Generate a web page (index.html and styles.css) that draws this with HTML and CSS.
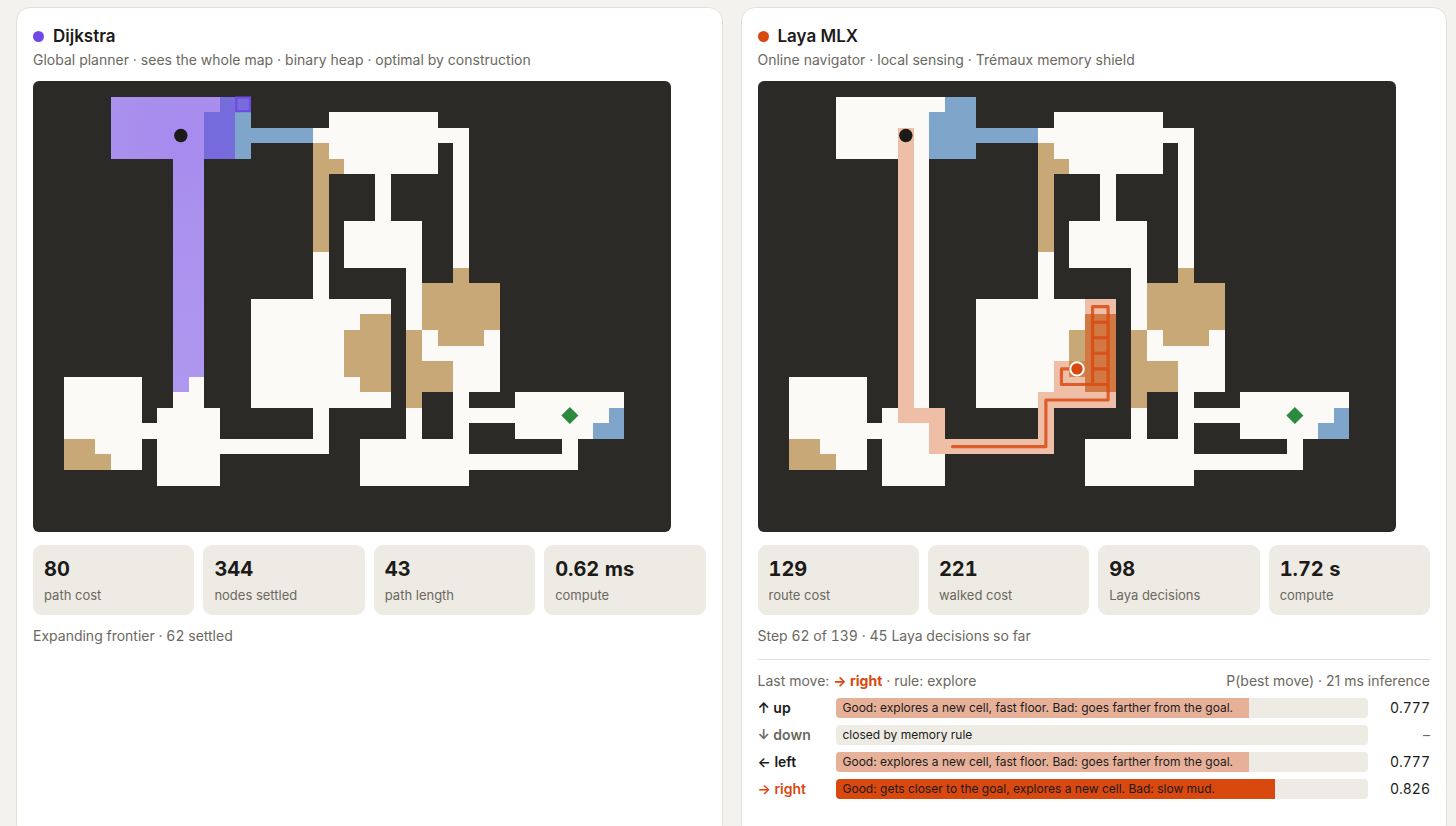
FILE: index.html
```html
<!DOCTYPE html>
<html lang="en">
<head>
  <meta charset="UTF-8" />
  <meta name="viewport" content="width=device-width, initial-scale=1.0"/>
  <title>Dijkstra vs Laya MLX</title>
  <link rel="stylesheet" href="styles.css">
</head>
<body>
  <!-- shared map, one unit per cell, 41 x 29 -->
  <svg class="defs" width="0" height="0" aria-hidden="true">
    <defs>
      <g id="terrain">
        <rect class="wall" width="41" height="29"/>
        <path class="floor" d="M5 1h9v4h-9z M18 3h1v11h-1z M19 2h7v4h-7z M26 3h2v1h-2z M27 3h1v9h-1z M22 6h1v3h-1z M20 9h5v3h-5z M24 12h1v11h-1z M25 13h5v7h-5z M14 14h9v7h-9z M18 21h1v3h-1z M12 23h7v1h-7z M2 19h5v6h-5z M7 22h1v1h-1z M8 21h4v5h-4z M9 5h2v16h-2z M27 20h1v3h-1z M28 21h3v1h-3z M31 20h7v3h-7z M34 23h1v1h-1z M28 24h7v1h-7z M21 23h7v3h-7z"/>
        <path class="water" d="M12 1h2v1h-2z M11 2h3v3h-3z M14 3h4v1h-4z M37 21h1v1h-1z M36 22h2v1h-2z"/>
        <path class="mud" d="M18 4h1v7h-1z M19 5h1v1h-1z M27 12h1v1h-1z M25 13h5v3h-5z M26 16h3v1h-3z M24 16h1v5h-1z M25 18h2v2h-2z M21 15h2v5h-2z M20 16h1v3h-1z M2 23h2v1h-2z M2 24h3v1h-3z"/>
      </g>
      <g id="markers">
        <circle class="start" cx="9.5" cy="3.5" r="0.43"/>
        <path class="goal" d="M34.5 20.95l.55 .55l-.55 .55l-.55 -.55z"/>
      </g>
      <radialGradient id="wave" gradientUnits="userSpaceOnUse" cx="9.5" cy="3.5" r="17">
        <stop offset="0" stop-color="#6f42e8" stop-opacity="0.61"/>
        <stop offset="0.3" stop-color="#6f42e8" stop-opacity="0.57"/>
        <stop offset="1" stop-color="#6f42e8" stop-opacity="0.54"/>
      </radialGradient>
    </defs>
  </svg>

  <main class="panels">
    <section class="card">
      <h2><span class="dot dijkstra"></span>Dijkstra</h2>
      <p class="sub">Global planner · sees the whole map · binary heap · optimal by construction</p>
      <svg class="map" viewBox="0 0 41 29" role="img" aria-label="Dijkstra map">
        <use href="#terrain"/>
        <path class="settled" d="M5 1h9v1h-1v3h-2v14h-1v1h-1v-15h-4z"/>
        <rect class="current" x="13.06" y="1.06" width="0.88" height="0.88"/>
        <use href="#markers"/>
      </svg>
      <div class="stats">
        <div class="stat"><b>80</b><span>path cost</span></div>
        <div class="stat"><b>344</b><span>nodes settled</span></div>
        <div class="stat"><b>43</b><span>path length</span></div>
        <div class="stat"><b>0.62 ms</b><span>compute</span></div>
      </div>
      <p class="status">Expanding frontier · 62 settled</p>
    </section>

    <section class="card">
      <h2><span class="dot laya"></span>Laya MLX</h2>
      <p class="sub">Online navigator · local sensing · Trémaux memory shield</p>
      <svg class="map" viewBox="0 0 41 29" role="img" aria-label="Laya MLX map">
        <use href="#terrain"/>
        <path class="visited" d="M9 3h1v18h2v2h6v-3h1v-2h2v2h2v1h-4v3h-8v-2h-2z M21 14h2v1h-2z"/>
        <rect class="revisited" x="21" y="15" width="2" height="5"/>
        <path class="trail" d="M12.5 23.5H18.5V20.5H22.5V14.5H21.5V19.5 M21.5 15.5H22.5 M21.5 16.5H22.5 M21.5 17.5H22.5 M21.5 18.5H22.5 M22.5 19.5H19.5V18.5H20.5"/>
        <use href="#markers"/>
        <circle class="agent" cx="20.5" cy="18.5" r="0.43"/>
      </svg>
      <div class="stats">
        <div class="stat"><b>129</b><span>route cost</span></div>
        <div class="stat"><b>221</b><span>walked cost</span></div>
        <div class="stat"><b>98</b><span>Laya decisions</span></div>
        <div class="stat"><b>1.72 s</b><span>compute</span></div>
      </div>
      <p class="status">Step 62 of 139 · 45 Laya decisions so far</p>

      <div class="decision">
        <div class="decision-head">
          <span>Last move: <b>→ right</b> · rule: explore</span>
          <span>P(best move) · 21 ms inference</span>
        </div>
        <div class="move">
          <span class="name">↑ up</span>
          <div class="bar"><div class="fill" style="width: 77.7%"></div><span>Good: explores a new cell, fast floor. Bad: goes farther from the goal.</span></div>
          <span class="prob">0.777</span>
        </div>
        <div class="move closed">
          <span class="name">↓ down</span>
          <div class="bar"><span>closed by memory rule</span></div>
          <span class="prob">–</span>
        </div>
        <div class="move">
          <span class="name">← left</span>
          <div class="bar"><div class="fill" style="width: 77.7%"></div><span>Good: explores a new cell, fast floor. Bad: goes farther from the goal.</span></div>
          <span class="prob">0.777</span>
        </div>
        <div class="move chosen">
          <span class="name">→ right</span>
          <div class="bar"><div class="fill" style="width: 82.6%"></div><span>Good: gets closer to the goal, explores a new cell. Bad: slow mud.</span></div>
          <span class="prob">0.826</span>
        </div>
      </div>
    </section>
  </main>
</body>
</html>
```
FILE: styles.css
```css
* {
  box-sizing: border-box;
}

body {
  margin: 0;
  background: #f4f2ee;
  color: #1c1b19;
  font-family: Inter, "Liberation Sans", sans-serif;
  font-size: 14px;
  line-height: 20px;
}

h2,
p {
  margin: 0;
}

.defs {
  position: absolute;
}

.panels {
  display: grid;
  grid-template-columns: 1fr 1fr;
  gap: 18px;
  padding: 7px 9px 0 16px;
}

.card {
  background: #fff;
  border: 1px solid #e3e0d8;
  border-radius: 14px;
  padding: 16px 16px 38px;
}

.card h2 {
  display: flex;
  align-items: center;
  gap: 9px;
  font-size: 17px;
  line-height: 24px;
  font-weight: 600;
}

.dot {
  width: 11px;
  height: 11px;
  border-radius: 50%;
}

.dot.dijkstra {
  background: #7048e8;
}

.dot.laya {
  background: #d9480f;
}

.sub,
.status,
.decision-head {
  color: #6b6860;
}

.sub {
  margin: 2px 0 11px;
}

/* map */
.map {
  display: block;
  width: 100%;
  max-width: 638px;
  border-radius: 6px;
}

.wall,
.floor,
.water,
.mud,
.settled,
.visited,
.revisited {
  shape-rendering: crispEdges;
}

.wall {
  fill: #2b2a26;
}

.floor {
  fill: #fbfaf6;
}

.water {
  fill: #7fa5ca;
}

.mud {
  fill: #c8a876;
}

.settled {
  fill: url(#wave);
}

.current {
  fill: none;
  stroke: #7048e8;
  stroke-width: 0.13;
}

.start {
  fill: #1c1b19;
}

.goal {
  fill: #2b8a3e;
}

.visited {
  fill: #d9480f;
  fill-opacity: 0.34;
}

.revisited {
  fill: #d9480f;
  fill-opacity: 0.5;
}

.trail {
  fill: none;
  stroke: #d9480f;
  stroke-width: 0.2;
  stroke-linecap: round;
  stroke-linejoin: round;
  opacity: 0.82;
}

.agent {
  fill: #d9480f;
  stroke: #fff;
  stroke-width: 0.13;
}

/* stats */
.stats {
  display: grid;
  grid-template-columns: repeat(4, 1fr);
  gap: 9px;
  margin: 13px 0 11px;
}

.stat {
  background: #eeebe4;
  border-radius: 9px;
  padding: 10px 11px;
}

.stat b {
  display: block;
  font-size: 20px;
  line-height: 28px;
  font-weight: 700;
  font-variant-numeric: tabular-nums;
}

.stat span {
  display: block;
  margin-top: 2px;
  color: #6b6860;
  font-size: 13px;
}

.status {
  font-variant-numeric: tabular-nums;
}

/* decision */
.decision {
  display: grid;
  gap: 7px;
  margin-top: 13px;
  border-top: 1px solid #e3e0d8;
  padding-top: 11px;
}

.decision-head {
  display: flex;
  justify-content: space-between;
}

.decision-head b {
  color: #d9480f;
}

.move {
  display: grid;
  grid-template-columns: 68px 1fr 52px;
  gap: 10px;
}

.name {
  font-weight: 600;
}

.bar {
  position: relative;
  background: #eeebe4;
  border-radius: 4px;
  overflow: hidden;
  padding-left: 7px;
  font-size: 12px;
}

.bar span {
  position: relative;
}

.fill {
  position: absolute;
  inset: 0 auto 0 0;
  background: #e7b199;
}

.prob {
  text-align: right;
  font-variant-numeric: tabular-nums;
}

.closed .name,
.closed .prob {
  color: #6b6860;
}

.chosen .name {
  color: #d9480f;
}

.chosen .fill {
  background: #d9480f;
}
```
